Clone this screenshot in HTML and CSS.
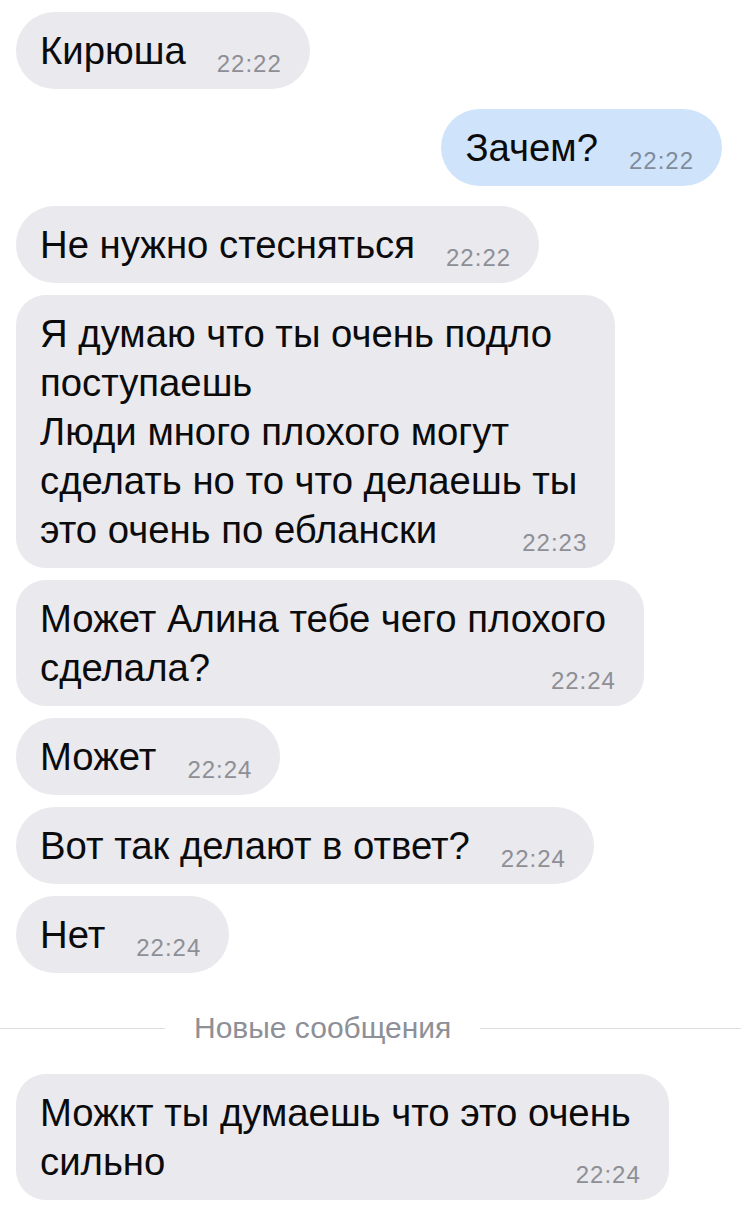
FILE: index.html
```html
<!DOCTYPE html>
<html lang="ru">
<head>
<meta charset="utf-8">
<title>Чат</title>
<link rel="stylesheet" href="styles.css">
</head>
<body>
<main class="chat">
  <div class="msg in">
    <div class="line last"><span>Кирюша</span><span class="time">22:22</span></div>
  </div>
  <div class="msg out switch">
    <div class="line last"><span>Зачем?</span><span class="time">22:22</span></div>
  </div>
  <div class="msg in switch">
    <div class="line last"><span>Не нужно стесняться</span><span class="time">22:22</span></div>
  </div>
  <div class="msg in multi">
    <div class="line">Я думаю что ты очень подло</div>
    <div class="line">поступаешь</div>
    <div class="line">Люди много плохого могут</div>
    <div class="line">сделать но то что делаешь ты</div>
    <div class="line last"><span>это очень по еблански</span><span class="time">22:23</span></div>
  </div>
  <div class="msg in multi">
    <div class="line">Может Алина тебе чего плохого</div>
    <div class="line last"><span>сделала?</span><span class="time">22:24</span></div>
  </div>
  <div class="msg in">
    <div class="line last"><span>Может</span><span class="time">22:24</span></div>
  </div>
  <div class="msg in">
    <div class="line last"><span>Вот так делают в ответ?</span><span class="time">22:24</span></div>
  </div>
  <div class="msg in">
    <div class="line last"><span>Нет</span><span class="time">22:24</span></div>
  </div>
  <div class="divider">
    <span class="rule rule-left"></span>
    <span class="divider-text">Новые сообщения</span>
    <span class="rule rule-right"></span>
  </div>
  <div class="msg in multi after-divider">
    <div class="line">Можкт ты думаешь что это очень</div>
    <div class="line last"><span>сильно</span><span class="time">22:24</span></div>
  </div>
</main>
</body>
</html>
```

FILE: styles.css
```css
html, body {
  margin: 0;
  padding: 0;
  background: #ffffff;
}

body {
  font-family: "Liberation Sans", Arial, Helvetica, sans-serif;
  color: #0b0b0c;
  width: 741px;
  height: 1229px;
  overflow: hidden;
}

.chat {
  display: flex;
  flex-direction: column;
  gap: 12px;
  padding: 12px 19px 0 16px;
}

.msg {
  box-sizing: border-box;
  padding: 14px 38px 14px 24px;
  border-radius: 38.5px;
  font-size: 38.3px;
  line-height: 49px;
  white-space: nowrap;
}

.msg.multi {
  border-radius: 30px;
}

.msg.in {
  align-self: flex-start;
  background: #e9e9ee;
}

.msg.out {
  align-self: flex-end;
  background: #cfe4fb;
}

.msg.switch {
  margin-top: 8px;
}

.line {
  height: 49px;
}

.line.last {
  display: flex;
  justify-content: space-between;
  align-items: baseline;
  gap: 31px;
}

.time {
  font-size: 24px;
  line-height: 24px;
  letter-spacing: 1px;
  color: #8e8f95;
  margin-right: -10px;
  transform: translateY(8px);
}

.msg.out .time {
  color: #7f8c9c;
}

.divider {
  display: flex;
  align-items: center;
  gap: 29px;
  margin: 25px -19px 0 -16px;
  height: 36px;
}

.rule {
  height: 1px;
  background: #dcdde1;
}

.rule-left {
  width: 165px;
  flex: none;
}

.rule-right {
  flex: 1;
}

.divider-text {
  font-size: 30px;
  line-height: 36px;
  color: #8d9096;
  white-space: nowrap;
}

.msg.after-divider {
  margin-top: 16px;
}
```
